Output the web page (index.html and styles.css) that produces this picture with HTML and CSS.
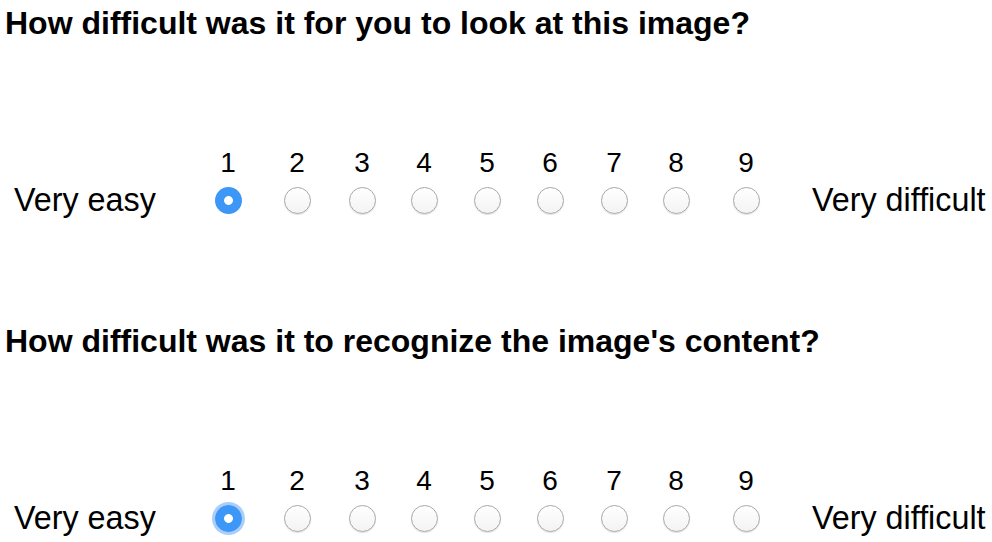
FILE: index.html
```html
<!DOCTYPE html>
<html>
<head>
<meta charset="utf-8">
<link rel="stylesheet" href="styles.css">
</head>
<body>
<section class="question">
  <h2 class="q-title">How difficult was it for you to look at this image?</h2>
  <div class="scale">
    <span class="num">1</span><span class="num">2</span><span class="num">3</span><span class="num">4</span><span class="num">5</span><span class="num">6</span><span class="num">7</span><span class="num">8</span><span class="num">9</span>
    <span class="label left">Very easy</span>
    <input class="radio" type="radio" name="q1" value="1" checked>
    <input class="radio" type="radio" name="q1" value="2">
    <input class="radio" type="radio" name="q1" value="3">
    <input class="radio" type="radio" name="q1" value="4">
    <input class="radio" type="radio" name="q1" value="5">
    <input class="radio" type="radio" name="q1" value="6">
    <input class="radio" type="radio" name="q1" value="7">
    <input class="radio" type="radio" name="q1" value="8">
    <input class="radio" type="radio" name="q1" value="9">
    <span class="label right">Very difficult</span>
  </div>
</section>
<section class="question">
  <h2 class="q-title">How difficult was it to recognize the image's content?</h2>
  <div class="scale">
    <span class="num">1</span><span class="num">2</span><span class="num">3</span><span class="num">4</span><span class="num">5</span><span class="num">6</span><span class="num">7</span><span class="num">8</span><span class="num">9</span>
    <span class="label left">Very easy</span>
    <input class="radio focused" type="radio" name="q2" value="1" checked>
    <input class="radio" type="radio" name="q2" value="2">
    <input class="radio" type="radio" name="q2" value="3">
    <input class="radio" type="radio" name="q2" value="4">
    <input class="radio" type="radio" name="q2" value="5">
    <input class="radio" type="radio" name="q2" value="6">
    <input class="radio" type="radio" name="q2" value="7">
    <input class="radio" type="radio" name="q2" value="8">
    <input class="radio" type="radio" name="q2" value="9">
    <span class="label right">Very difficult</span>
  </div>
</section>
</body>
</html>
```
FILE: styles.css
```css
html, body {
  margin: 0;
  padding: 0;
  background: #fff;
}
body {
  font-family: "Liberation Sans", Arial, Helvetica, sans-serif;
  color: #000;
  padding-top: 5px;
  width: 992px;
  overflow: hidden;
}
.question {
  margin-bottom: 105px;
}
.q-title {
  margin: 0;
  padding-left: 5px;
  font-size: 32px;
  line-height: 36px;
  font-weight: bold;
  white-space: nowrap;
}
.scale {
  margin-top: 106px;
  display: grid;
  grid-template-columns: 194px 68px 70px 60px 64px 62px 64px 64px 60px 80px auto;
  grid-template-rows: 32px 36px;
  row-gap: 3px;
  justify-items: center;
  align-items: center;
}
.num {
  grid-row: 1;
  font-size: 28px;
  line-height: 32px;
}
.num:nth-child(1) { grid-column: 2; }
.num:nth-child(2) { grid-column: 3; }
.num:nth-child(3) { grid-column: 4; }
.num:nth-child(4) { grid-column: 5; }
.num:nth-child(5) { grid-column: 6; }
.num:nth-child(6) { grid-column: 7; }
.num:nth-child(7) { grid-column: 8; }
.num:nth-child(8) { grid-column: 9; }
.num:nth-child(9) { grid-column: 10; }
.label {
  grid-row: 2;
  font-size: 32.3px;
  line-height: 36px;
  white-space: nowrap;
}
.label.left {
  grid-column: 1;
  justify-self: start;
  padding-left: 14px;
}
.label.right {
  grid-column: 11;
  justify-self: start;
  padding-left: 26px;
}
.radio {
  grid-row: 2;
  -webkit-appearance: none;
  appearance: none;
  width: 27px;
  height: 27px;
  margin: 0;
  border-radius: 50%;
  border: 1px solid #a8a8a8;
  background: linear-gradient(#ffffff, #f3f3f3);
  box-shadow: 0 1px 1px rgba(0, 0, 0, 0.12);
  box-sizing: border-box;
  outline: none;
}
.radio:checked {
  border: none;
  background: radial-gradient(circle, #ffffff 0, #ffffff 4px, #3d97f7 4.8px);
  box-shadow: none;
}
.radio.focused {
  box-shadow: 0 0 0 3px rgba(100, 165, 245, 0.55);
}
```
